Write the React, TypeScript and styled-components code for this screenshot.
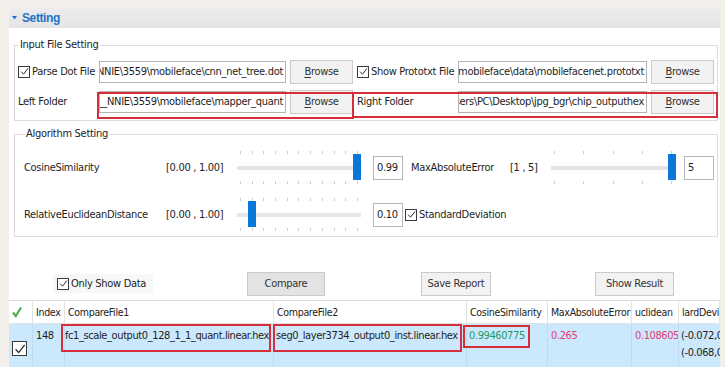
import React from "react";
import styled, { createGlobalStyle } from "styled-components";

const FONT = `"DejaVu Sans Condensed", "DejaVu Sans", sans-serif`;

const GlobalStyle = createGlobalStyle`
  html, body {
    margin: 0;
    padding: 0;
  }
  body {
    width: 725px;
    height: 367px;
    overflow: hidden;
    background: #f3f0eb;
    font-family: ${FONT};
    font-size: 11px;
    letter-spacing: -0.3px;
    color: #1e1e1e;
  }
`;

const Page = styled.div`
  padding: 7px 5px 0 9px;
`;

const Panel = styled.div`
  width: 711px;
  min-height: 360px;
  background: #fff;
`;

const Header = styled.div`
  height: 21px;
  display: flex;
  align-items: center;
  gap: 5px;
  padding-left: 3px;
  background: linear-gradient(#ededed, #e4e4e4);
`;

const HeaderTitle = styled.span`
  color: #1f72c6;
  font-family: "Liberation Sans", Arial, sans-serif;
  font-weight: bold;
  font-size: 12px;
  letter-spacing: -0.4px;
`;

const Body = styled.div`
  padding: 0 2px 0 5px;
`;

const Group = styled.fieldset<{ $top: number; $pad: string }>`
  margin: ${(p) => p.$top}px 0 0;
  padding: ${(p) => p.$pad};
  border: 1px solid #dcdcdc;
  min-width: 0;
`;

const Legend = styled.legend`
  padding: 0 2px 0 1px;
  margin-left: 1px;
  line-height: 14px;
  color: #222;
`;

const FileRow = styled.div`
  display: flex;
  align-items: center;
  gap: 4px;
  height: 23px;
  & + & {
    margin-top: 7px;
  }
`;

const Highlight = styled.div<{ $inset: string }>`
  position: relative;
  display: flex;
  align-items: center;
  gap: 4px;
  &::after {
    content: "";
    position: absolute;
    inset: ${(p) => p.$inset};
    border: 2px solid #d62f3c;
    pointer-events: none;
  }
`;

const CheckLabel = styled.label<{ $w?: number }>`
  display: flex;
  align-items: center;
  gap: 2px;
  white-space: nowrap;
  width: ${(p) => (p.$w ? `${p.$w}px` : "auto")};
  flex: none;
`;

const TextLabel = styled.span<{ $w: number }>`
  width: ${(p) => p.$w}px;
  flex: none;
  white-space: nowrap;
`;

const PathInput = styled.div<{ $w: number }>`
  width: ${(p) => p.$w}px;
  height: 22px;
  box-sizing: border-box;
  border: 1px solid #b4b4b4;
  background: #fff;
  display: flex;
  align-items: center;
  justify-content: flex-end;
  overflow: hidden;
  padding-right: 2px;
  white-space: nowrap;
  flex: none;
`;

const Button = styled.button<{ $w: number; $dark?: boolean }>`
  width: ${(p) => p.$w}px;
  height: 24px;
  box-sizing: border-box;
  border: 1px solid #cacaca;
  background: ${(p) => (p.$dark ? "#e3e3e3" : "#f2f2f2")};
  font-family: ${FONT};
  font-size: 11px;
  letter-spacing: -0.3px;
  color: #333;
  padding: 0;
  flex: none;
  u {
    text-decoration-thickness: 1px;
    text-underline-offset: 2px;
  }
`;

const Box = styled.span<{ $size: number }>`
  width: ${(p) => p.$size}px;
  height: ${(p) => p.$size}px;
  box-sizing: border-box;
  border: 1px solid #3a3a3a;
  background: #fff;
  display: inline-flex;
  align-items: center;
  justify-content: center;
  flex: none;
`;

const CheckBox = ({ size = 12 }: { size?: number }) => (
  <Box $size={size}>
    <svg width={size - 3} height={size - 3} viewBox="0 0 10 10">
      <polyline points="1.3,5.2 3.9,8 8.9,1.6" fill="none" stroke="#2a2a2a" strokeWidth="1.1" />
    </svg>
  </Box>
);

const AlgoRow = styled.div`
  display: flex;
  align-items: center;
  height: 33px;
  & + & {
    margin-top: 14px;
  }
`;

const SliderWrap = styled.div<{ $w: number }>`
  position: relative;
  width: ${(p) => p.$w}px;
  height: 33px;
  flex: none;
  display: flex;
  flex-direction: column;
  justify-content: space-between;
`;

const Ticks = styled.div`
  display: flex;
  justify-content: space-between;
  padding: 0 4px;
  height: 3px;
`;

const Tick = styled.span`
  width: 1px;
  height: 3px;
  background: #cdcdcd;
`;

const Track = styled.div`
  height: 4px;
  background: #e5e5e5;
  margin: 0 1px;
`;

const Thumb = styled.span`
  position: absolute;
  top: 3px;
  width: 8px;
  height: 26px;
  margin-left: -4px;
  background: #0a78d7;
`;

const Slider = ({ width, ticks, fraction }: { width: number; ticks: number; fraction: number }) => (
  <SliderWrap $w={width}>
    <Ticks>
      {Array.from({ length: ticks }, (_, i) => (
        <Tick key={i} />
      ))}
    </Ticks>
    <Track />
    <Ticks>
      {Array.from({ length: ticks }, (_, i) => (
        <Tick key={i} />
      ))}
    </Ticks>
    <Thumb style={{ left: 4 + (width - 8) * fraction }} />
  </SliderWrap>
);

const ValueBox = styled.div<{ $ml: number; $mr: number }>`
  width: 30px;
  height: 24px;
  box-sizing: border-box;
  border: 1px solid #b7b7b7;
  padding: 0 3px;
  display: flex;
  align-items: center;
  margin: 0 ${(p) => p.$mr}px 0 ${(p) => p.$ml}px;
  flex: none;
`;

const ActionBar = styled.div`
  display: grid;
  grid-template-columns: 190px 174px 174px auto;
  align-items: center;
  padding-left: 48px;
  margin-top: 34px;
  height: 25px;
`;

const OnlyShow = styled.div`
  display: flex;
  align-items: center;
  gap: 2px;
  width: 96px;
  height: 19px;
  margin-left: -4px;
  padding-left: 4px;
  background: #f7f7f7;
  white-space: nowrap;
`;

const Table = styled.div`
  margin-top: 4px;
  display: grid;
  grid-template-columns: 24px 32px 209px 193px 81px 84px 47px 41px;
  border-top: 1px solid #dadada;
`;

const HeadCell = styled.div`
  height: 22px;
  display: flex;
  align-items: center;
  padding-left: 3px;
  border-right: 1px solid #e2e2e2;
  border-bottom: 1px solid #e2e2e2;
  white-space: nowrap;
  overflow: hidden;
  font-size: 10.5px;
  color: #222;
  &:last-child {
    border-right: none;
  }
`;

const DataCell = styled.div<{ $color?: string; $pl?: number }>`
  position: relative;
  height: 40px;
  padding: 3px 0 0 ${(p) => p.$pl ?? 3}px;
  line-height: 17px;
  letter-spacing: -0.4px;
  background: #cce8fc;
  border-right: 1px solid #bedcf2;
  white-space: nowrap;
  color: ${(p) => p.$color || "#1e1e1e"};
  &:last-child {
    border-right: none;
  }
`;

const CheckCell = styled(DataCell)`
  padding: 17px 0 0 3px;
`;

const Clip = styled.div`
  overflow: hidden;
`;

const Mark = styled.span<{ $l: number; $t: number; $w: number; $h: number }>`
  position: absolute;
  left: ${(p) => p.$l}px;
  top: ${(p) => p.$t}px;
  width: ${(p) => p.$w}px;
  height: ${(p) => p.$h}px;
  box-sizing: border-box;
  border: 2px solid #d62f3c;
  pointer-events: none;
`;

const Browse = () => (
  <Button $w={63}>
    <u>B</u>rowse
  </Button>
);

export default function App() {
  return (
    <>
      <GlobalStyle />
      <Page>
        <Panel>
          <Header>
            <svg width="5" height="4" viewBox="0 0 5 4">
              <polygon points="0,0 5,0 2.5,3.5" fill="#1f72c6" />
            </svg>
            <HeaderTitle>Setting</HeaderTitle>
          </Header>
          <Body>
            <Group $top={10} $pad="8px 4px 7px 3px">
              <Legend>Input File Setting</Legend>
              <FileRow>
                <CheckLabel $w={77}>
                  <CheckBox />
                  Parse Dot File
                </CheckLabel>
                <PathInput $w={187}>D:\sample_NNIE\3559\mobileface\cnn_net_tree.dot</PathInput>
                <Browse />
                <CheckLabel $w={97}>
                  <CheckBox />
                  Show Prototxt File
                </CheckLabel>
                <PathInput $w={189}>D:\sample_NNIE\3559\mobileface\data\mobilefacenet.prototxt</PathInput>
                <Browse />
              </FileRow>
              <FileRow>
                <TextLabel $w={77}>Left Folder</TextLabel>
                <Highlight $inset="2px -1px -5px -2px">
                  <PathInput $w={187}>D:\sample__NNIE\3559\mobileface\mapper_quant</PathInput>
                  <Browse />
                </Highlight>
                <Highlight $inset="2px -4px -4px -5px">
                  <TextLabel $w={97}>Right Folder</TextLabel>
                  <PathInput $w={189}>C:\Users\PC\Desktop\jpg_bgr\chip_outputhex</PathInput>
                  <Browse />
                </Highlight>
              </FileRow>
            </Group>

            <Group $top={6} $pad="10px 4px 5px 9px">
              <Legend>Algorithm Setting</Legend>
              <AlgoRow>
                <TextLabel $w={142}>CosineSimilarity</TextLabel>
                <TextLabel $w={70}>[0.00 , 1.00]</TextLabel>
                <Slider width={126} ticks={11} fraction={0.99} />
                <ValueBox $ml={11} $mr={8}>0.99</ValueBox>
                <TextLabel $w={99}>MaxAbsoluteError</TextLabel>
                <TextLabel $w={40}>[1 , 5]</TextLabel>
                <Slider width={126} ticks={5} fraction={1} />
                <ValueBox $ml={8} $mr={0}>5</ValueBox>
              </AlgoRow>
              <AlgoRow>
                <TextLabel $w={142}>RelativeEuclideanDistance</TextLabel>
                <TextLabel $w={70}>[0.00 , 1.00]</TextLabel>
                <Slider width={126} ticks={11} fraction={0.1} />
                <ValueBox $ml={11} $mr={2}>0.10</ValueBox>
                <CheckLabel>
                  <CheckBox />
                  StandardDeviation
                </CheckLabel>
              </AlgoRow>
            </Group>
          </Body>

          <ActionBar>
            <OnlyShow>
              <CheckBox />
              Only Show Data
            </OnlyShow>
            <Button $w={78} $dark>
              Compare
            </Button>
            <Button $w={70}>Save Report</Button>
            <Button $w={79}>Show Result</Button>
          </ActionBar>

          <Table>
            <HeadCell>
              <svg width="10" height="12" viewBox="0 0 10 12">
                <path d="M1 6.5 L3.8 10 L9 1.5" fill="none" stroke="#4cb050" strokeWidth="2.2" />
              </svg>
            </HeadCell>
            <HeadCell>Index</HeadCell>
            <HeadCell>CompareFile1</HeadCell>
            <HeadCell>CompareFile2</HeadCell>
            <HeadCell>CosineSimilarity</HeadCell>
            <HeadCell>MaxAbsoluteError</HeadCell>
            <HeadCell>uclidean</HeadCell>
            <HeadCell>lardDevi</HeadCell>

            <CheckCell>
              <CheckBox size={15} />
            </CheckCell>
            <DataCell>148</DataCell>
            <DataCell $pl={0}>
              <Clip>fc1_scale_output0_128_1_1_quant.linear.hex</Clip>
              <Mark $l={-4} $t={0} $w={210} $h={28} />
            </DataCell>
            <DataCell $pl={2}>
              <Clip>seg0_layer3734_output0_inst.linear.hex</Clip>
              <Mark $l={-1} $t={0} $w={189} $h={28} />
            </DataCell>
            <DataCell $color="#1c9a6c" $pl={2}>
              <Clip>0.99460775</Clip>
              <Mark $l={-4} $t={1} $w={67} $h={23} />
            </DataCell>
            <DataCell $color="#dc3f74">0.265</DataCell>
            <DataCell $color="#dc3f74">
              <Clip>0.108605</Clip>
            </DataCell>
            <DataCell $pl={2}>
              <Clip>
                (-0.072,0
                <br />
                (-0.068,0
              </Clip>
            </DataCell>
          </Table>
        </Panel>
      </Page>
    </>
  );
}
